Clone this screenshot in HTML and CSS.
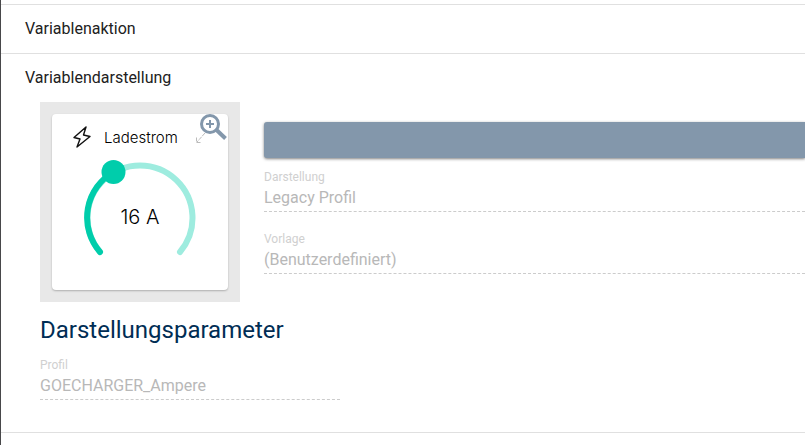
FILE: index.html
```html
<!DOCTYPE html>
<html lang="de">

<head>
    <meta charset="UTF-8">
    <meta name="viewport" content="width=device-width, initial-scale=1.0">
    <title>Variablendarstellung</title>
    <link rel="stylesheet" href="styles.css">
</head>

<body>
    <main class="panel-list">
        <section class="panel">
            <h3 class="panel-title">Variablenaktion</h3>
        </section>

        <section class="panel">
            <h3 class="panel-title">Variablendarstellung</h3>
            <div class="panel-content">
                <div class="presentation">
                    <div class="preview">
                        <div class="tile">
                            <div class="tile-header">
                                <svg class="bolt" width="20" height="24" viewBox="0 0 20 24" aria-hidden="true">
                                    <path d="M14 2 L2 12.5 L8 14 L5 22 L18 11.5 L11.5 10 Z" />
                                </svg>
                                <span>Ladestrom</span>
                            </div>
                            <div class="gauge">
                                <svg width="124" height="112" viewBox="0 0 124 112" aria-hidden="true">
                                    <path class="gauge-track" d="M22 96 A52.5 52.5 0 1 1 102 96" />
                                    <path class="gauge-value" d="M22 96 A52.5 52.5 0 0 1 35.5 16" />
                                    <circle class="gauge-knob" cx="35.5" cy="16" r="12" />
                                </svg>
                                <span class="gauge-text">16 A</span>
                            </div>
                        </div>
                        <button class="zoom" type="button" aria-label="Zoom">
                            <svg width="34" height="34" viewBox="0 0 34 34" aria-hidden="true">
                                <path class="expand" d="M10 21 L2 30 M1.5 25.5 V30.5 H6.500" />
                                <circle class="lens" cx="15" cy="12" r="8.5" />
                                <path class="handle" d="M21 17.5 L30.5 26.5" />
                                <path class="plus" d="M15 8 V16 M11 12 H19" />
                            </svg>
                        </button>
                    </div>

                    <div class="settings">
                        <button class="action" type="button" aria-label="Darstellung bearbeiten"></button>
                        <div class="field">
                            <label for="darstellung">Darstellung</label>
                            <input id="darstellung" type="text" value="Legacy Profil" disabled>
                        </div>
                        <div class="field">
                            <label for="vorlage">Vorlage</label>
                            <input id="vorlage" type="text" value="(Benutzerdefiniert)" disabled>
                        </div>
                    </div>
                </div>

                <h2 class="parameter-title">Darstellungsparameter</h2>
                <div class="field field-short">
                    <label for="profil">Profil</label>
                    <input id="profil" type="text" value="GOECHARGER_Ampere" disabled>
                </div>
            </div>
        </section>
    </main>
</body>

</html>
```
FILE: styles.css
```css
* {
    margin: 0;
    padding: 0;
    box-sizing: border-box;
}

body {
    min-height: 100vh;
    border-left: 1px solid #48484a;
    background-color: #fff;
    font-family: Roboto, "Liberation Sans", sans-serif;
    color: #212121;
}

.panel-list {
    padding-top: 4px;
    border-bottom: 1px solid #e0e0e0;
}

.panel {
    border-top: 1px solid #e0e0e0;
}

.panel-title {
    padding: 0 24px;
    font-size: 16px;
    font-weight: 400;
    line-height: 48px;
}

.panel-content {
    padding: 0 0 32px 39px;
}

.presentation {
    display: flex;
    gap: 24px;
}

.preview {
    position: relative;
    flex: none;
    padding: 12px;
    background-color: #e8e8e8;
}

.tile {
    width: 176px;
    height: 176px;
    border-radius: 4px;
    background-color: #fff;
    box-shadow: 0 1px 2px rgba(0, 0, 0, 0.25);
    font-family: Inter, "Open Sans", sans-serif;
    font-weight: 300;
    color: #000;
}

.tile-header {
    display: flex;
    align-items: center;
    gap: 12px;
    height: 42px;
    padding: 4px 0 0 20px;
    font-size: 15px;
}

.bolt {
    fill: none;
    stroke: #111;
    stroke-width: 1.4;
    stroke-linejoin: round;
}

.gauge {
    display: grid;
    place-items: center;
}

.gauge > * {
    grid-area: 1 / 1;
}

.gauge-track,
.gauge-value {
    fill: none;
    stroke: #9eecdf;
    stroke-width: 6;
    stroke-linecap: round;
}

.gauge-value {
    stroke: #00cdab;
}

.gauge-knob {
    fill: #00cdab;
}

.gauge-text {
    padding-top: 10px;
    font-size: 20px;
    line-height: 24px;
}

.zoom {
    position: absolute;
    top: 10px;
    right: 11px;
    border: none;
    background: none;
    cursor: pointer;
}

.zoom svg {
    display: block;
    fill: none;
    stroke: #8397ab;
}

.zoom .lens {
    stroke-width: 3;
}

.zoom .handle {
    stroke-width: 4;
}

.zoom .plus {
    stroke-width: 2;
}

.zoom .expand {
    stroke: #bbb;
    stroke-dasharray: 4 1;
}

.settings {
    flex: 1;
    padding-top: 20px;
}

.action {
    display: block;
    width: 100%;
    height: 36px;
    margin-bottom: 12px;
    border: none;
    border-radius: 3px 0 0 3px;
    background-color: #8397ab;
    box-shadow: 0 1px 3px rgba(0, 0, 0, 0.5);
    cursor: pointer;
}

.field {
    margin-bottom: 20px;
}

.field label {
    display: block;
    font-size: 12px;
    line-height: 14px;
    color: #d0d0d0;
}

.field input {
    display: block;
    width: 100%;
    height: 28px;
    border: none;
    border-bottom: 1px dashed #ccc;
    background: none;
    font-family: inherit;
    font-size: 16px;
    color: #b8b8b8;
}

.field-short {
    max-width: 300px;
    margin-bottom: 0;
}

.parameter-title {
    margin: 12px 0;
    font-size: 24px;
    font-weight: 400;
    line-height: 32px;
    color: #002d54;
}
```
